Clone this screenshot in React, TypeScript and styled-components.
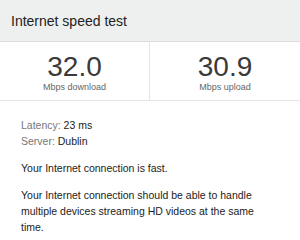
import React from "react";
import styled, { createGlobalStyle } from "styled-components";

const Global = createGlobalStyle`
  html, body { margin: 0; padding: 0; background: #fff; }
  body { font-family: "Liberation Sans", Arial, sans-serif; }
`;

const Card = styled.div`
  width: 300px;
  height: 240px;
  overflow: hidden;
  background: #fff;
`;

const Header = styled.div`
  height: 42px;
  box-sizing: border-box;
  background: #eef0ef;
  border-bottom: 1px solid #dcdedd;
  display: flex;
  align-items: center;
  padding: 1px 11px 0;
  font-size: 14px;
  color: #222;
`;

const Stats = styled.div`
  display: grid;
  grid-template-columns: 150px 150px;
  height: 59px;
  box-sizing: border-box;
  border-bottom: 1px solid #e4e4e4;
`;

const Stat = styled.div<{ $divider?: boolean }>`
  display: flex;
  flex-direction: column;
  align-items: center;
  padding-top: 11px;
  border-right: ${(p) => (p.$divider ? "1px solid #e6e6e6" : "none")};
`;

const Value = styled.div`
  font-size: 28px;
  line-height: 28px;
  color: #3a3a3a;
`;

const Unit = styled.div`
  font-size: 9px;
  line-height: 11px;
  color: #666;
  margin-top: 1px;
`;

const Body = styled.div`
  padding: 16px 21px 0;
  font-size: 10.5px;
  line-height: 16px;
  color: #222;
`;

const Meta = styled.div`
  margin-bottom: 11px;
`;

const Label = styled.span`
  color: #777;
`;

const Para = styled.p`
  margin: 0 0 11px;
`;

export default function App() {
  return (
    <Card>
      <Global />
      <Header>Internet speed test</Header>
      <Stats>
        <Stat $divider>
          <Value>32.0</Value>
          <Unit>Mbps download</Unit>
        </Stat>
        <Stat>
          <Value>30.9</Value>
          <Unit>Mbps upload</Unit>
        </Stat>
      </Stats>
      <Body>
        <Meta>
          <div>
            <Label>Latency:</Label> 23 ms
          </div>
          <div>
            <Label>Server:</Label> Dublin
          </div>
        </Meta>
        <Para>Your Internet connection is fast.</Para>
        <Para>
          Your Internet connection should be able to handle multiple devices
          streaming HD videos at the same time.
        </Para>
      </Body>
    </Card>
  );
}
